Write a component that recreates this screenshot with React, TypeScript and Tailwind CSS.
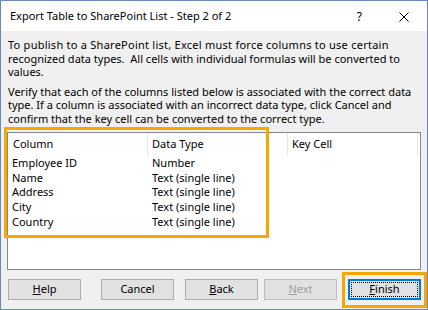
import React from 'react';

const rows = [
  { col: 'Employee ID', type: 'Number' },
  { col: 'Name', type: 'Text (single line)' },
  { col: 'Address', type: 'Text (single line)' },
  { col: 'City', type: 'Text (single line)' },
  { col: 'Country', type: 'Text (single line)' },
];

const font = { fontFamily: '"Segoe UI", "Noto Sans", Arial, sans-serif' };

function Button({ children, disabled, focused, className = '' }: { children: React.ReactNode; disabled?: boolean; focused?: boolean; className?: string }) {
  if (focused) {
    return (
      <div className={`w-[73px] h-[21px] border-2 border-[#0078d7] bg-[#e1e1e1] p-px ${className}`}>
        <div className="w-full h-full border border-dotted border-black flex items-center justify-center text-[11px] text-black">
          {children}
        </div>
      </div>
    );
  }
  return (
    <div
      className={`w-[73px] h-[21px] border flex items-center justify-center text-[11px] ${
        disabled ? 'border-[#bfbfbf] bg-[#e1e1e1] text-[#a0a0a0]' : 'border-[#adadad] bg-[#e1e1e1] text-black'
      } ${className}`}
    >
      {children}
    </div>
  );
}

export default function App() {
  return (
    <div className="relative w-[428px] h-[310px] border border-[#6b88bd] bg-[#f0f0f0] flex flex-col text-black" style={font}>
      {/* title bar */}
      <div className="h-[30px] bg-white flex items-center pl-[9px] shrink-0">
        <span className="text-[11px] flex-1 mt-[1px]">Export Table to SharePoint List - Step 2 of 2</span>
        <span className="text-[12px] mr-[37px] mt-[1px]">?</span>
        <svg width="10" height="10" viewBox="0 0 10 10" className="mr-[18px] mt-[2px]">
          <path d="M0.5 0.5 L9.5 9.5 M9.5 0.5 L0.5 9.5" stroke="#000" strokeWidth="1" />
        </svg>
      </div>

      {/* instructions */}
      <div className="px-[7px] pt-[7px] text-[11px] leading-[13.5px] whitespace-nowrap">
        <p className="tracking-[0.25px]">To publish to a SharePoint list, Excel must force columns to use certain</p>
        <p>recognized data types.&nbsp; All cells with individual formulas will be converted to</p>
        <p>values.</p>
        <p className="mt-[6px]">Verify that each of the columns listed below is associated with the correct data</p>
        <p>type. If a column is associated with an incorrect data type, click Cancel and</p>
        <p>confirm that the key cell can be converted to the correct type.</p>
      </div>

      {/* list view */}
      <div className="mx-[6px] mt-[7px] h-[138px] border border-[#828790] bg-white text-[11px]">
        <div className="flex h-[22px] items-center">
          <div className="w-[140px] h-full flex items-center pl-[5px] border-r border-[#e5e5e5]">Column</div>
          <div className="w-[140px] h-full flex items-center pl-[4px] border-r border-[#e5e5e5]">Data Type</div>
          <div className="w-[130px] h-full flex items-center pl-[4px] border-r border-[#e5e5e5]">Key Cell</div>
        </div>
        {rows.map((r) => (
          <div key={r.col} className="flex h-[14.75px] items-center leading-none">
            <div className="w-[140px] pl-[4px]">{r.col}</div>
            <div className="w-[140px] pl-[4px]">{r.type}</div>
          </div>
        ))}
      </div>

      {/* buttons */}
      <div className="flex items-center pl-[7px] mt-[9px]">
        <Button><span><u>H</u>elp</span></Button>
        <Button className="ml-[20px]">Cancel</Button>
        <Button className="ml-[11px]"><span><u>B</u>ack</span></Button>
        <Button disabled className="ml-[6px]"><span><u>N</u>ext</span></Button>
        <Button focused className="ml-[11px]"><span><u>F</u>inish</span></Button>
      </div>

      {/* orange highlight frames */}
      <div className="absolute left-[3px] top-[126px] w-[265px] h-[111px] border-[3px] border-[#f7a800] pointer-events-none" />
      <div className="absolute left-[341px] top-[271px] w-[85px] h-[36px] border-[3px] border-[#f7a800] pointer-events-none" />
    </div>
  );
}
